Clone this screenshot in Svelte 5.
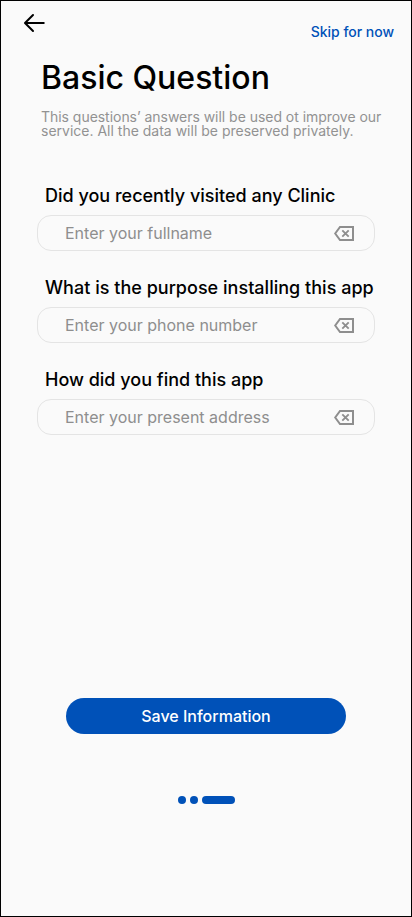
<script>
  const questions = [
    { label: 'Did you recently visited any Clinic', hint: 'Enter your fullname' },
    { label: 'What is the purpose installing this app', hint: 'Enter your phone number', wide: true },
    { label: 'How did you find this app', hint: 'Enter your present address' }
  ];
</script>

<main>
  <header>
    <svg class="back" width="22" height="20" viewBox="0 0 22 20" fill="none" stroke="#000" stroke-width="2" stroke-linecap="round" stroke-linejoin="round"><path d="M21.5 10H2" stroke-linecap="butt" /><path d="M10 2L2 10L10 18" /></svg>
    <a href="#skip">Skip for now</a>
  </header>
  <h1>Basic Question</h1>
  <p class="first">This questions’ answers will be used ot improve our</p>
  <p>service. All the data will be preserved privately.</p>
  <form>
    {#each questions as q}
      <section>
        <h2 class:wide={q.wide}>{q.label}</h2>
        <div class="field">
          <span>{q.hint}</span>
          <svg width="21" height="16" viewBox="0 0 21 16" fill="none" stroke="#8e8e8e" stroke-width="2"><path d="M6 2H19V15H6L1.2 8.5Z" /><path d="M8.3 5.4L14.7 11.6M14.7 5.4L8.3 11.6" stroke-width="1.9" /></svg>
        </div>
      </section>
    {/each}
  </form>
  <button>Save Information</button>
  <div class="dots"><i></i><i></i><i class="current"></i></div>
</main>

<style>
  :global(body) { margin: 0; }
  main {
    box-sizing: border-box;
    width: 412px;
    height: 917px;
    border: 1px solid #000;
    background: #fafafa;
    font-family: Inter, sans-serif;
    display: flex;
    flex-direction: column;
    overflow: hidden;
  }
  header { height: 58px; display: flex; justify-content: space-between; padding: 0 17px 0 22px; flex: none; }
  .back { margin-top: 12px; }
  a { margin-top: 22px; font-size: 14px; line-height: 18px; font-weight: 500; letter-spacing: -0.03px; color: #0051b8; text-decoration: none; white-space: nowrap; }
  h1 { margin: 0 0 0 40px; font-size: 32px; line-height: 38px; font-weight: 500; white-space: nowrap; }
  p { margin: 0 0 0 40px; font-size: 14px; line-height: 14px; color: #929292; white-space: nowrap; }
  .first { margin-top: 13px; letter-spacing: -0.035px; }
  form { padding: 47px 36px 0; }
  section { height: 92px; }
  h2 { margin: 0 0 8px 8px; font-size: 18px; line-height: 22px; font-weight: 500; white-space: nowrap; }
  .wide { letter-spacing: 0.02px; }
  .field { box-sizing: border-box; height: 36px; border: 1px solid #e4e4e4; border-radius: 14px; display: flex; align-items: center; justify-content: space-between; padding: 0 19px 0 27px; font-size: 16px; color: #8e8e8e; }
  button { margin: 237px 0 0 65px; width: 280px; height: 36px; flex: none; padding: 0; border: 0; border-radius: 18px; background: #0051b8; color: #fff; font: 500 16px/20px Inter, sans-serif; }
  .dots { display: flex; gap: 4px; margin: 62px 0 0 177px; }
  i { width: 8px; height: 8px; border-radius: 4px; background: #0051b8; }
  .current { width: 33px; }
</style>
